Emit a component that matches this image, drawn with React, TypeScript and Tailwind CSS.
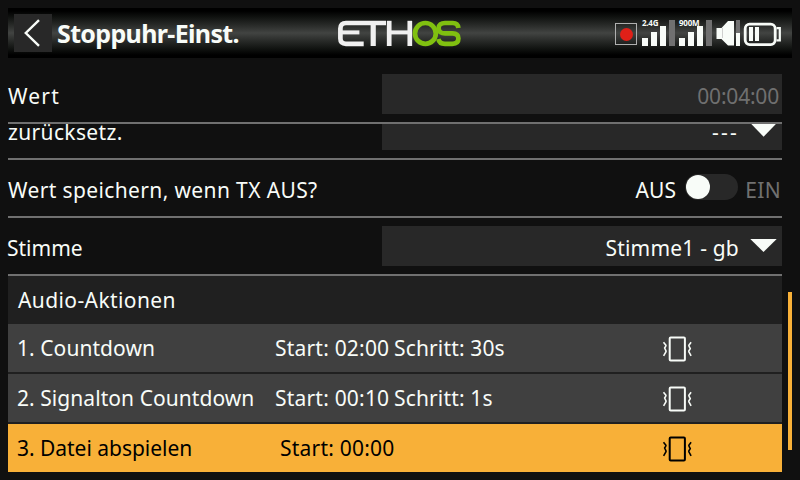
import React from "react";

const Caret = ({ clipped = false }: { clipped?: boolean }) =>
  clipped ? (
    <svg width="26" height="13" viewBox="0 0 26 13" className="block shrink-0" fill="#f8fcf8">
      <path d="M0.3 0H24.9L12.6 12.7Z" />
    </svg>
  ) : (
    <svg width="27" height="13" viewBox="0 0 27 13" className="block shrink-0" fill="#f8fcf8">
      <path d="M0.3 0H26.7L13.5 13Z" />
    </svg>
  );

const Vibration = () => (
  <svg width="32" height="28" viewBox="0 0 32 28" className="mt-[3px] block shrink-0" fill="none" stroke="currentColor" strokeLinejoin="round">
    <rect x="8.7" y="2.4" width="15.2" height="23.1" rx="1" strokeWidth="2" />
    <path d="M2.5 7.2L4.9 10.2Q5.2 10.8 4.5 11.6L3.6 13L5 15.8Q5.3 16.6 4.6 17.4L2.6 20.8" strokeWidth="1.6" />
    <path d="M30.1 7.2L27.9 10.2Q27.6 10.8 28.2 11.6L29.3 13.6L27.9 15.8Q27.6 16.6 28.2 17.4L30.1 20.8" strokeWidth="1.6" />
  </svg>
);

const Logo = () => (
  <svg width="126" height="28" viewBox="0 0 126 28" className="block" fill="none" strokeWidth="4.7">
    <g stroke="#f0f0f0">
      <path d="M48 3H8Q2.4 3 2.4 8.4V18.6Q2.4 23.8 8 23.8H25.7" />
      <path d="M2.6 12.4H21.4" strokeWidth="4" />
      <path d="M35.2 3V26" strokeWidth="5.2" />
      <path d="M51.2 0.8V26" />
      <path d="M71.8 0.8V26" />
      <path d="M51 12.4H72" strokeWidth="4" />
    </g>
    <g stroke="#80c010">
      <ellipse cx="87.4" cy="13.4" rx="10.4" ry="10.4" />
      <path d="M120.4 8C120 4.4 118 3 114.8 3H107C103.2 3 100.6 4.8 100.6 8.2S103.2 13.4 107 13.4H114.4C118.2 13.4 120.4 15.2 120.4 18.6S118.2 23.8 114.4 23.8H107C103.6 23.8 101 22.2 100.4 19" />
    </g>
  </svg>
);

const Signal = ({ label }: { label: string }) => (
  <div className="relative flex h-[26px] w-[33px] items-end gap-[3px]">
    <span className="absolute top-[-3px] left-0 font-['Open_Sans',sans-serif] text-[8px] leading-[12px] font-bold tracking-[-0.25px]">
      {label}
    </span>
    <i className="h-2 w-1.5 bg-[#f8fcf8]" />
    <i className="h-3.5 w-1.5 bg-[#f8fcf8]" />
    <i className="h-5 w-1.5 bg-[#f8fcf8]" />
    <i className="h-[26px] w-1.5 bg-[#707070]" />
  </div>
);

const Header = () => (
  <header className="mx-2 flex h-[50px] shrink-0 items-start bg-[linear-gradient(to_bottom,#000_0%,#000_6%,#101210_18%,#282a28_34%,#424442_50%,#282a28_66%,#101210_82%,#000_94%,#000_100%)]">
    <div className="mt-1.5 ml-1.5 flex h-[38px] w-[38px] justify-center bg-[#282828]">
      <svg width="38" height="38" viewBox="0 0 38 38" fill="none" stroke="#f8fcf8" strokeWidth="2.4">
        <path d="M25 6.2L11.8 19L25 31.8" />
      </svg>
    </div>
    <h1 className="ml-[5px] w-[281px] text-[25px] leading-[50px] font-bold tracking-[-0.65px] whitespace-nowrap">Stoppuhr-Einst.</h1>
    <div className="mt-[12px] w-[126px]">
      <Logo />
    </div>
    <div className="mt-3 ml-[151px] flex">
      <div className="mt-[3px] flex h-[22px] w-[22px] items-center justify-center border border-[#b0b0b0]">
        <i className="mt-[1px] h-[13px] w-[13px] rounded-full bg-[#e02018]" />
      </div>
      <div className="ml-[5px] flex gap-1">
        <Signal label="2.4G" />
        <Signal label="900M" />
      </div>
      <svg width="25" height="26" viewBox="0 0 25 26" className="ml-1" fill="#f8fcf8">
        <path d="M0.5 8H5.5L12 1H18V25.5H12L5.5 19H0.5Z" />
        <path d="M6.5 8V18" stroke="#bbb" strokeWidth="0.7" />
        <path d="M20 0H24V13H20Z" fill="#707070" />
        <path d="M20 13H24V26H20Z" />
      </svg>
      <svg width="40" height="28" viewBox="0 0 40 28" className="ml-[2px]" fill="none" stroke="#f8fcf8">
        <rect x="2.2" y="4.2" width="30" height="20.4" rx="4.5" strokeWidth="2.8" />
        <path d="M33.5 8.2H36.8V20.4H33.5" strokeWidth="2.2" />
        <path d="M6 7H10V21H6ZM12 7H16V21H12Z" fill="#f8fcf8" stroke="none" />
      </svg>
    </div>
  </header>
);

const actions = [
  { name: "1. Countdown", start: "Start: 02:00", step: "Schritt: 30s" },
  { name: "2. Signalton Countdown", start: "Start: 00:10", step: "Schritt: 1s" },
  { name: "3. Datei abspielen", start: "Start: 00:00", step: "", selected: true },
];

export default function App() {
  return (
    <div className="flex h-[480px] w-[800px] flex-col overflow-hidden bg-[#101010] pt-2 font-['Noto_Sans',sans-serif] text-[21px] whitespace-nowrap text-[#f8fcf8]">
      <Header />
      <div className="flex h-[414px] px-2">
        <main className="flex w-[774px] flex-col">
          <section className="flex h-[66px] justify-between border-b-2 border-[#707070] pt-4">
            <span className="leading-[44px] tracking-[1.2px]">Wert</span>
            <div className="h-10 w-[400px] bg-[#282828] pr-[3px] text-right leading-[44px] tracking-[-0.2px] text-[#707070]">00:04:00</div>
          </section>
          <section className="flex h-9 justify-between overflow-hidden border-b-2 border-[#707070]">
            <span className="mt-[-14px] leading-[44px] tracking-[0.35px]">zurücksetz.</span>
            <div className="flex h-[26px] w-[400px] justify-end bg-[#282828] pr-[5px]">
              <span className="mt-[-14px] mr-[12px] leading-[44px] tracking-[2.2px]">---</span>
              <Caret clipped />
            </div>
          </section>
          <section className="flex h-[58px] justify-between border-b-2 border-[#707070]">
            <span className="mt-[8px] leading-[44px] tracking-[0.37px]">Wert speichern, wenn TX AUS?</span>
            <div className="flex pr-[1px]">
              <span className="mt-[8px] leading-[44px] tracking-[0.2px]">AUS</span>
              <span className="mt-[14px] mr-[7px] ml-[9px] flex h-[26px] w-[53px] items-center rounded-full bg-[#282828] pl-[1px]">
                <i className="h-6 w-6 rounded-full bg-[#f8fcf8]" />
              </span>
              <span className="mt-[8px] leading-[44px] tracking-[0.3px] text-[#707070]">EIN</span>
            </div>
          </section>
          <section className="flex h-[58px] justify-between border-b-2 border-[#707070] pt-2">
            <span className="ml-[-1px] leading-[44px]">Stimme</span>
            <div className="flex h-10 w-[400px] justify-end bg-[#282828] pr-[5px]">
              <span className="mr-[11px] leading-[44px] tracking-[0.2px]">Stimme1 - gb</span>
              <span className="mt-[13px]">
                <Caret />
              </span>
            </div>
          </section>
          <section className="flex flex-col bg-[#202020]">
            <h2 className="h-12 pl-2.5 leading-[48px] tracking-[0.4px]">Audio-Aktionen</h2>
            <div className="flex flex-col gap-0.5">
              {actions.map((a) => (
                <div key={a.name} className={`flex h-12 pl-2 leading-[48px] ${a.selected ? "bg-[#f8b038] text-black" : "bg-[#404040]"}`}>
                  <span className={a.selected ? "w-[258px] pl-[1px] tracking-[-0.03px]" : "w-[258px] pl-[1px] tracking-[0.06px]"}>{a.name}</span>
                  <span className={a.selected ? "w-[387px] pl-[6px] tracking-[0.22px]" : "w-[120px] pl-[1px] tracking-[0.2px]"}>{a.start}</span>
                  {!a.selected && <span className="w-[267px] tracking-[0.15px]">{a.step}</span>}
                  <span className="mt-[8px]">
                    <Vibration />
                  </span>
                </div>
              ))}
            </div>
          </section>
        </main>
        <div className="mt-[234px] ml-1.5 h-[158px] w-1 bg-[#f8b038]" />
      </div>
    </div>
  );
}
